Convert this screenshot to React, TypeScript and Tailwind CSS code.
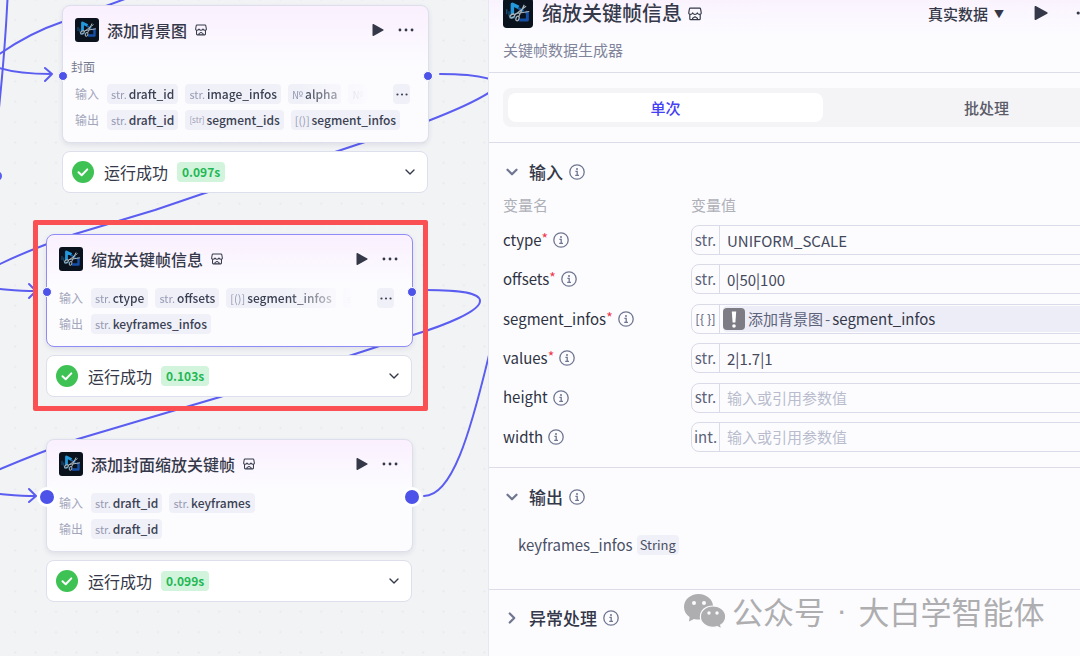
import { useState } from "react";
import type { ReactNode } from "react";
import clsx from "clsx";
import { ChevronDown, ChevronRight } from "lucide-react";

interface Param {
  type: string;
  name: string;
}

interface Field {
  name: string;
  type: string;
  required?: boolean;
  value?: string;
  reference?: { node: string; field: string };
}

interface NodeCardProps {
  title: string;
  note?: string;
  inputs: Param[];
  outputs: Param[];
  duration: string;
  className: string;
  truncated?: boolean;
  selected?: boolean;
  largePorts?: boolean;
}

const fields: Field[] = [
  { name: "ctype", type: "str.", required: true, value: "UNIFORM_SCALE" },
  { name: "offsets", type: "str.", required: true, value: "0|50|100" },
  {
    name: "segment_infos",
    type: "[{ }]",
    required: true,
    reference: { node: "添加背景图", field: "segment_infos" },
  },
  { name: "values", type: "str.", required: true, value: "2|1.7|1" },
  { name: "height", type: "str." },
  { name: "width", type: "int." },
];

const PluginIcon = ({ className }: { className: string }) => (
  <svg viewBox="0 0 24 24" className={className} aria-hidden="true">
    <rect width="24" height="24" rx="3" fill="#0a131d" />
    <path d="M7.500 13V5L12.500 7.500" fill="none" stroke="#2299dd" strokeWidth="2.800" strokeLinejoin="round" />
    <path d="M12 8L16.500 10.500" fill="none" stroke="#155a9c" strokeWidth="2" />
    <path d="M13 17.500H19.500V12L18 11" fill="none" stroke="#164fa8" strokeWidth="2.400" strokeLinejoin="round" />
    <path d="M3 9v4M4.800 10.500v4" stroke="#1d5580" strokeWidth="1" />
    <path d="M5 15.500h5" stroke="#125478" strokeWidth="2" />
    <g fill="none" stroke="#a9b4bd" strokeWidth="1">
      <path d="M18.500 6.500L9 13.800M21 10.800L9.500 12.600M17 5.500L12.500 15" />
      <ellipse cx="7.400" cy="14.400" rx="2" ry="1.300" transform="rotate(-30 7.400 14.400)" />
      <ellipse cx="11.600" cy="16.400" rx="1.200" ry="1.900" transform="rotate(20 11.600 16.400)" />
    </g>
  </svg>
);

const StoreIcon = ({ className }: { className: string }) => (
  <svg
    viewBox="0 0 14 14"
    className={className}
    fill="none"
    stroke="currentColor"
    strokeWidth="1.200"
    strokeLinejoin="round"
    aria-hidden="true"
  >
    <path d="M2.300 1.200h9.400c.5 0 .8.3.9.8l.6 3.500c.2 1.300-.5 1.900-1.500 1.900s-1.900-.5-2.400-1.500C8.800 6.900 8 7.400 7 7.400s-1.800-.5-2.300-1.500c-.5 1-1.400 1.500-2.400 1.500S.6 6.800.8 5.500L1.400 2c.1-.5.4-.8.9-.8z" />
    <path d="M1.800 7.400v4.400c0 .6.3.9.9.9h8.600c.6 0 .9-.3.9-.9V7.400" />
    <path d="M4.600 12.500V11.200L7 9.800l2.400 1.400v1.300" />
  </svg>
);

const InfoIcon = () => (
  <svg
    viewBox="0 0 16 16"
    className="h-4 w-4 shrink-0 text-[#6f7690]"
    fill="none"
    stroke="currentColor"
    aria-hidden="true"
  >
    <circle cx="8" cy="8" r="7.200" strokeWidth="1.300" />
    <circle cx="8" cy="4.900" r="1" fill="currentColor" stroke="none" />
    <path d="M6.400 7.300H8.200V11.200M6.200 11.300H10" strokeWidth="1.300" />
  </svg>
);

const PlayIcon = ({ className }: { className: string }) => (
  <svg viewBox="0 0 12 12" className={className} fill="currentColor" aria-hidden="true">
    <path d="M.5.700c0-.6.500-.9 1-.6l9.800 5.300c.5.300.5.900 0 1.200L1.500 11.900c-.5.300-1 0-1-.6z" />
  </svg>
);

const MoreIcon = ({ className }: { className: string }) => (
  <svg viewBox="0 0 18 4" className={className} fill="currentColor" aria-hidden="true">
    <circle cx="2.200" cy="2" r="1.600" />
    <circle cx="9" cy="2" r="1.600" />
    <circle cx="15.800" cy="2" r="1.600" />
  </svg>
);

const Chip = ({ type, name }: Param) => (
  <span className="flex h-5 shrink-0 items-center gap-[2px] rounded bg-[#f0f0f8] px-1 text-xs leading-5 font-medium text-[#3a3f52]">
    <span
      className={clsx(
        "font-normal text-[#989cb4]",
        type === "[str]" ? "text-[8px]" : "text-[11px]"
      )}
    >
      {type}
    </span>
    {name}
  </span>
);

const ParamRow = ({
  label,
  params,
  truncated,
}: {
  label: string;
  params: Param[];
  truncated?: boolean;
}) => (
  <div className="flex h-5 items-center">
    <span className="w-8 shrink-0 text-xs text-[#a3a7bb]">{label}</span>
    <div
      className={clsx(
        "flex min-w-0 flex-1 gap-[7px] overflow-hidden",
        truncated &&
          "[mask-image:linear-gradient(to_left,transparent_8px,black_76px)]"
      )}
    >
      {params.map((param) => (
        <Chip key={param.name} {...param} />
      ))}
    </div>
    {truncated && (
      <button
        aria-label="更多参数"
        className="ml-4 flex h-5 w-[17px] shrink-0 items-center justify-center rounded bg-[#f0f0f8] text-[#3a3f52]"
      >
        <MoreIcon className="h-[3px] w-3" />
      </button>
    )}
  </div>
);

const Port = ({ large, className }: { large?: boolean; className: string }) => (
  <span
    className={clsx(
      "absolute rounded-full border-white bg-[#4d53e8]",
      large ? "-m-[10px] h-5 w-5 border-3" : "-m-[5px] h-[10px] w-[10px] border",
      className
    )}
  />
);

const NodeCard = ({
  title,
  note,
  inputs,
  outputs,
  duration,
  className,
  truncated,
  selected,
  largePorts,
}: NodeCardProps) => (
  <article className={clsx("absolute flex w-[367px] flex-col gap-2", className)}>
    <div
      className={clsx(
        "relative rounded-lg border bg-[#fcfcff] bg-linear-to-b from-[#faf0fe] to-[#fcfcff] to-45% px-3 pb-3 shadow-[0_2px_5px_rgba(60,60,100,0.10)]",
        selected ? "border-[#8f8cf5]" : "border-[#dedfec]"
      )}
    >
      <header className="mb-[3px] flex h-12 items-center pr-[2px] text-[#343848]">
        <PluginIcon className="h-6 w-6" />
        <h3 className="ml-2 text-base font-medium">{title}</h3>
        <StoreIcon className="ml-2 h-3 w-3" />
        <button aria-label="运行" className="ml-auto">
          <PlayIcon className="h-3 w-3" />
        </button>
        <button aria-label="更多" className="ml-[14px]">
          <MoreIcon className="h-1 w-4" />
        </button>
      </header>
      {note && (
        <p className="-ml-1 mb-[5px] h-5 text-xs leading-5 text-[#777b90]">{note}</p>
      )}
      <div className="flex flex-col gap-[6px] pt-[2px] pr-[6px]">
        <ParamRow label="输入" params={inputs} truncated={truncated} />
        <ParamRow label="输出" params={outputs} />
      </div>
      <Port
        large={largePorts}
        className={clsx("left-0", note ? "top-[70px]" : "top-[57px]")}
      />
      <Port
        large={largePorts}
        className={clsx("left-full", note ? "top-[70px]" : "top-[57px]")}
      />
    </div>
    <div className="mr-px flex h-[42px] items-center rounded-lg border border-[#dedfec] bg-white px-[9px] text-[#343848]">
      <svg viewBox="0 0 22 22" className="h-[22px] w-[22px]" aria-hidden="true">
        <circle cx="11" cy="11" r="11" fill="#3ec254" />
        <path
          d="M6.500 11.200l3.200 3 5.600-5.800"
          fill="none"
          stroke="white"
          strokeWidth="2"
          strokeLinecap="round"
          strokeLinejoin="round"
        />
      </svg>
      <span className="ml-[10px] text-base">运行成功</span>
      <span className="ml-[9px] rounded bg-[#d2f3dc] px-[5px] text-xs leading-5 font-bold text-[#1fb855]">
        {duration}
      </span>
      <button aria-label="展开运行结果" className="ml-auto">
        <ChevronDown className="h-4 w-4" strokeWidth={2} />
      </button>
    </div>
  </article>
);

const Edges = () => (
  <svg className="absolute inset-0 h-full w-full" fill="none" aria-hidden="true">
    <defs>
      <pattern id="dots" width="20.400" height="20.400" patternUnits="userSpaceOnUse" x="5" y="-10.500">
        <circle cx="10.200" cy="10.200" r="1" fill="#e5e7eb" />
      </pattern>
    </defs>
    <rect width="100%" height="100%" fill="url(#dots)" />
    <g stroke="#5a5df0" strokeWidth="2" strokeLinecap="round" strokeLinejoin="round">
      <path d="M7.500 -1C6 30 4 60 -1 108" />
      <path d="M-2 55C18 41 38 30 62 22L125 -1" />
      <path d="M-1 68C12 72 26 74 51 74M45 68L52 74L45 81" />
      <path d="M440 74C462 74 476 75 490 79" />
      <path d="M490 92C472 104 446 114 428 121L335 152L202 194L155 210L75 234C46 244 20 254 -2 265" />
      <path d="M-1 289C12 290 22 291 35 291M29 284L36 291L29 298" />
      <path d="M426 290C462 290 480 293 480 301C480 311 446 325 413 335L352 355L220 397L142 420L78 439C46 450 24 459 -2 470" />
      <path d="M-1 494C12 495 22 496 35 496M29 489L36 496L29 502" />
      <path d="M424 496C452 496 470 434 489 355" />
      <circle cx="-3" cy="176" r="4" />
    </g>
  </svg>
);

const SectionTitle = ({ open, children }: { open?: boolean; children: ReactNode }) => (
  <button className="flex h-6 items-center" aria-expanded={!!open}>
    {open ? (
      <ChevronDown className="h-[18px] w-[18px] text-[#6f7690]" strokeWidth={3} />
    ) : (
      <ChevronRight className="h-[18px] w-[18px] text-[#6f7690]" strokeWidth={3} />
    )}
    <span className="mr-[6px] ml-2 text-[17px] font-medium text-[#343848]">
      {children}
    </span>
    <InfoIcon />
  </button>
);

const FieldRow = ({ field }: { field: Field }) => (
  <div className="flex h-[30px] items-center">
    <label
      htmlFor={field.name}
      className="flex w-[188px] shrink-0 items-center text-[15px] text-[#2f3342]"
    >
      {field.name}
      {field.required && <span className="-mt-1 text-sm text-[#f0364a]">*</span>}
      <span className="ml-[5px]">
        <InfoIcon />
      </span>
    </label>
    <div className="flex h-[30px] min-w-0 flex-1 items-center overflow-hidden rounded-lg border border-[#d9dbe8] text-[15px]">
      <span
        className={clsx(
          "flex h-full w-7 shrink-0 items-center justify-center border-r border-[#d9dbe8] whitespace-nowrap text-[#5d6379]",
          field.reference ? "text-[13px]" : "text-[15px]"
        )}
      >
        {field.type}
      </span>
      {field.reference ? (
        <button
          id={field.name}
          className="ml-[3px] flex h-[26px] flex-1 items-center rounded bg-[#ededf7] text-[#5d6379]"
        >
          <svg viewBox="0 0 22 22" className="h-[22px] w-[22px]" aria-hidden="true">
            <rect width="22" height="22" rx="4" fill="#7d7c85" />
            <path d="M8.800 3.500h4.400l-.8 11h-2.800z" fill="white" />
            <circle cx="11" cy="18" r="1.800" fill="white" />
          </svg>
          <span className="ml-[3px]">{field.reference.node}</span>
          <span className="mx-[2px]">-</span>
          <span className="text-[#343848]">{field.reference.field}</span>
        </button>
      ) : (
        <input
          id={field.name}
          type="text"
          defaultValue={field.value}
          placeholder="输入或引用参数值"
          className="h-full min-w-0 flex-1 bg-transparent px-[7px] text-[#44495c] outline-none placeholder:text-[#b9bccd]"
        />
      )}
    </div>
  </div>
);

const DetailPanel = () => {
  const [mode, setMode] = useState("单次");

  return (
    <section className="relative min-w-0 overflow-hidden border-l border-[#e6e7f2] bg-[#fcfcff]">
      <div className="min-w-[674px]">
        {/* Header */}
        <header className="h-[72px] bg-linear-to-b from-[#faf3fe] to-[#fcfcff] to-50% px-[14px]">
          <div className="flex h-7 items-end text-[#343848]">
            <PluginIcon className="h-[30px] w-[30px] shrink-0" />
            <h2 className="ml-[9px] self-start text-xl leading-[26px] font-medium">
              缩放关键帧信息
            </h2>
            <StoreIcon className="mb-[7px] ml-[6px] h-[14px] w-[14px]" />
            <select
              aria-label="数据来源"
              className="ml-[226px] h-7 w-[60px] appearance-none text-[15px] font-medium"
            >
              <option>真实数据</option>
            </select>
            <span className="mb-2 ml-[6px] text-[10px] leading-3">▼</span>
            <button aria-label="运行" className="mb-2 ml-[30px]">
              <PlayIcon className="h-[14px] w-[14px]" />
            </button>
            <button aria-label="更多" className="mb-[13px] ml-7">
              <MoreIcon className="h-1 w-[18px]" />
            </button>
          </div>
          <p className="mt-[11px] text-[15px] leading-[22px] text-[#80849a]">关键帧数据生成器</p>
        </header>

        {/* Run mode */}
        <div className="border-y border-[#dcdde9] px-[14px] py-[15px]">
          <div className="grid h-[39px] grid-cols-2 gap-[6px] rounded-lg bg-[#f4f4f6] p-[5px]">
            {["单次", "批处理"].map((item) => (
              <button
                key={item}
                onClick={() => setMode(item)}
                className={clsx(
                  "rounded-lg text-[15px] leading-[29px] font-medium",
                  mode === item ? "bg-white text-[#4440f5]" : "text-[#5a5a68]"
                )}
              >
                {item}
              </button>
            ))}
          </div>
        </div>

        {/* Inputs */}
        <div className="border-b border-[#dcdde9] px-[14px] pt-[17px] pb-[15px]">
          <SectionTitle open>输入</SectionTitle>
          <div className="mt-[10px] flex text-[15px] leading-[22px] text-[#aeb0b8]">
            <span className="w-[188px]">变量名</span>
            <span>变量值</span>
          </div>
          <div className="mt-[9px] flex h-[227px] flex-col justify-between">
            {fields.map((field) => (
              <FieldRow key={field.name} field={field} />
            ))}
          </div>
        </div>

        {/* Outputs */}
        <div className="border-b border-[#dcdde9] px-[14px] pt-[17px] pb-8">
          <SectionTitle open>输出</SectionTitle>
          <div className="mt-6 ml-[15px] flex h-6 items-center text-[15px] text-[#4b5064]">
            keyframes_infos
            <span className="ml-1 rounded bg-[#f0f0f8] px-[3px] text-[13px] leading-5">
              String
            </span>
          </div>
        </div>

        {/* Error handling */}
        <div className="px-[14px] py-4">
          <SectionTitle>异常处理</SectionTitle>
        </div>
      </div>

      {/* Watermark */}
      <div className="absolute top-[588px] left-[195px] flex h-[46px] items-center text-[31px] whitespace-nowrap text-[#aeaeb0]">
        <svg viewBox="0 0 42 35" className="mr-[6px] h-[35px] w-[42px]" aria-hidden="true">
          <path
            d="M14.500 0C6.500 0 0 5.500 0 13c0 4.200 2.100 7.500 5.600 10L5 27.500l5-2.600c1.500.5 3 .7 4.500.7 8 0 14.700-5.300 14.700-12.700S22.500 0 14.500 0z"
            fill="currentColor"
          />
          <path
            d="M29 12C21.800 12 16.400 16.600 16.400 22.700S21.800 33.300 29 33.300c1.400 0 2.800-.2 4.200-.6l4.400 2.200-.9-3.900c3-2 5-4.800 5-8.300C41.700 16.600 36.200 12 29 12z"
            fill="currentColor"
            stroke="#fcfcff"
            strokeWidth="1.200"
          />
          <g fill="#fcfcff">
            <circle cx="10" cy="9" r="2" />
            <circle cx="20" cy="9" r="2" />
            <circle cx="25" cy="19" r="1.700" />
            <circle cx="33" cy="19" r="1.700" />
          </g>
        </svg>
        公众号
        <span className="px-[3px] font-['Liberation_Sans',sans-serif] whitespace-pre"> · </span>
        大白学智能体
      </div>
    </section>
  );
};

const App = () => (
  <main className="grid min-h-screen grid-cols-[488fr_592fr] overflow-hidden font-['Noto_Sans_CJK_SC',sans-serif]">
    <section className="relative overflow-hidden bg-[#f2f3f5]">
      <Edges />
      <NodeCard
        title="添加背景图"
        note="封面"
        className="top-[5px] left-[62px]"
        inputs={[
          { type: "str.", name: "draft_id" },
          { type: "str.", name: "image_infos" },
          { type: "№", name: "alpha" },
          { type: "№", name: "" },
        ]}
        outputs={[
          { type: "str.", name: "draft_id" },
          { type: "[str]", name: "segment_ids" },
          { type: "[()]", name: "segment_infos" },
        ]}
        duration="0.097s"
        truncated
      />
      <NodeCard
        title="缩放关键帧信息"
        className="top-[234px] left-[46px]"
        inputs={[
          { type: "str.", name: "ctype" },
          { type: "str.", name: "offsets" },
          { type: "[()]", name: "segment_infos" },
          { type: "str.", name: "" },
        ]}
        outputs={[{ type: "str.", name: "keyframes_infos" }]}
        duration="0.103s"
        truncated
        selected
      />
      <NodeCard
        title="添加封面缩放关键帧"
        className="top-[439px] left-[46px]"
        inputs={[
          { type: "str.", name: "draft_id" },
          { type: "str.", name: "keyframes" },
        ]}
        outputs={[{ type: "str.", name: "draft_id" }]}
        duration="0.099s"
        largePorts
      />
      {/* Highlight around the selected node */}
      <div className="pointer-events-none absolute top-[220px] left-[33px] h-[191px] w-[395px] rounded-xs border-5 border-[#fb5053]" />
    </section>
    <DetailPanel />
  </main>
);

export default App;
